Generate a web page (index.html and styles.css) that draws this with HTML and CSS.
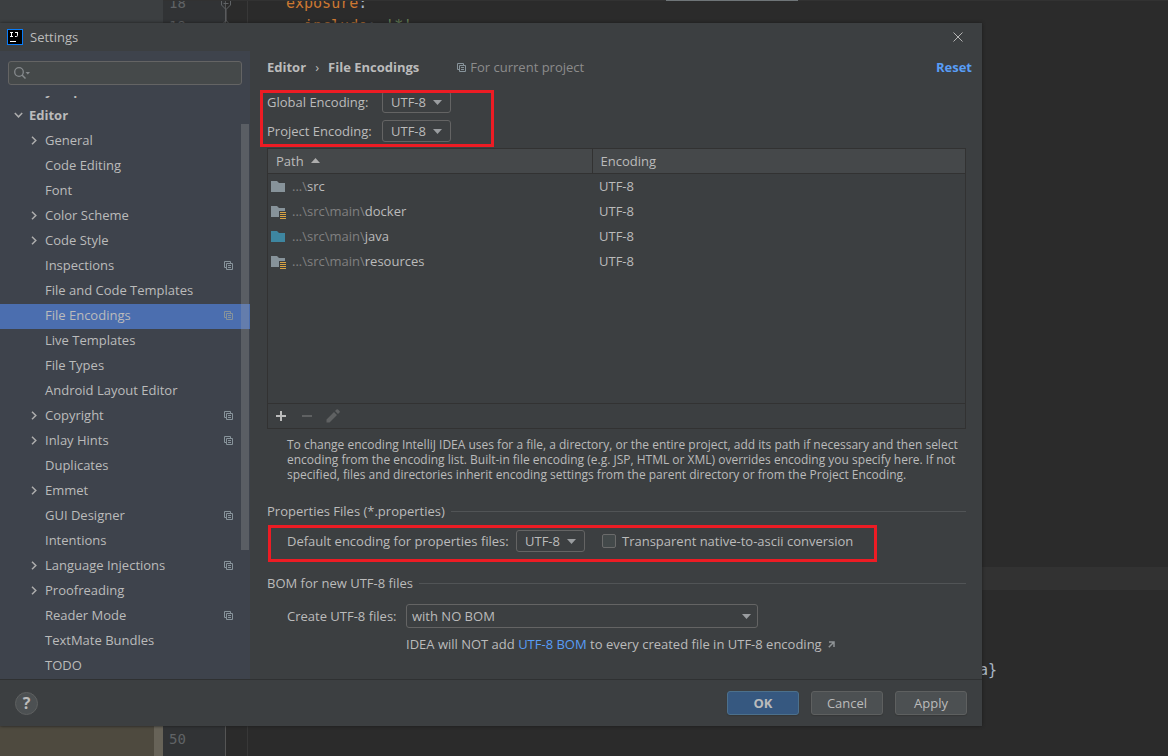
FILE: index.html
```html
<!DOCTYPE html>
<html lang="en">
<head>
<meta charset="utf-8">
<title>Settings</title>
<link rel="stylesheet" href="styles.css">
</head>
<body>
<svg class="defs" aria-hidden="true">
  <symbol id="copy" viewBox="0 0 9 9"><path d="M2 6.500H.5v-6h6V2M2.500 2.500h6v6h-6zM4 4.500h3M4 6.500h3" fill="none" stroke="currentColor"/></symbol>
  <symbol id="right" viewBox="0 0 7 9"><path d="M1 .8 4.800 4.500 1 8.200" fill="none" stroke="currentColor" stroke-width="1.500"/></symbol>
  <symbol id="down" viewBox="0 0 9 7"><path d="M.8 1 4.500 4.800 8.200 1" fill="none" stroke="currentColor" stroke-width="1.500"/></symbol>
  <symbol id="arrow" viewBox="0 0 9 5"><path d="M0 0h9L4.500 5z" fill="currentColor"/></symbol>
  <symbol id="folder" viewBox="0 0 16 14"><path d="M0 1h6l2 2h6v9H0z" fill="currentColor"/></symbol>
  <symbol id="resfolder" viewBox="0 0 16 14"><path d="M0 1h6l2 2h6v3H8v6H0z" fill="currentColor"/><path d="M9 7.500h6M9 9.500h6M9 11.500h6M9 13.500h6" stroke="#d9a343"/></symbol>
</svg>

<div class="ide">
  <div class="project"><div class="project-tail"></div></div>
  <div class="gutter">
    <div class="line">18</div><div class="line">19</div><div class="fill"></div><div class="line">50</div>
    <svg class="fold" viewBox="0 0 12 26"><path d="M1.500 0v5L6 9.500 10.500 5V0M3.500 3.500h5M6 9.500V21M1.500 26v-1L6 20.500l4.500 4.500v1" fill="none" stroke="#606366"/></svg>
  </div>
  <div class="code">
    <div class="line exposure"><span class="key">exposure</span>:</div>
    <div class="line include"><span class="key">include</span>: <span class="str">'*'</span></div>
    <div class="fill"></div>
    <div class="line current"></div>
    <div class="line"></div><div class="line"></div><div class="line"></div>
    <div class="line tail">a}</div>
    <div class="line"></div><div class="line"></div><div class="line"></div>
  </div>
  <div class="tabline"></div>
</div>

<main class="dialog">
  <header class="titlebar">
    <svg class="logo" viewBox="0 0 16 16"><path d="M0 0h16v16H0z" fill="#087cfa"/><path d="M1 1h14v14H1z" fill="#000"/><path d="M3 3.500h3M4.500 3v5M3 7.500h3M8 3.500h3M10.500 3v3.500q0 1-1 1H8M3 12.500h6" fill="none" stroke="#fff"/></svg>
    <span class="title">Settings</span>
    <button class="close" aria-label="Close"><svg viewBox="0 0 10 10"><path d="m.5.5 9 9m0-9-9 9" stroke="#b4b4b4"/></svg></button>
  </header>

  <div class="body">
    <aside class="sidebar">
      <label class="search">
        <svg viewBox="0 0 17 12"><circle cx="5" cy="5" r="4.300" fill="none" stroke="#85898c" stroke-width="1.300"/><path d="m8 8 3.500 3.500" stroke="#85898c" stroke-width="1.500"/><path d="M11.500 5H16l-2.200 2.500z" fill="#85898c"/></svg>
        <input type="text" aria-label="Search settings">
      </label>
      <div class="viewport">
        <ul class="tree">
          <li class="top">Keymap</li>
          <li class="top"><svg class="chev down"><use href="#down"/></svg>Editor</li>
          <li><svg class="chev"><use href="#right"/></svg>General</li>
          <li>Code Editing</li>
          <li>Font</li>
          <li><svg class="chev"><use href="#right"/></svg>Color Scheme</li>
          <li><svg class="chev"><use href="#right"/></svg>Code Style</li>
          <li>Inspections<svg class="copy"><use href="#copy"/></svg></li>
          <li>File and Code Templates</li>
          <li class="selected">File Encodings<svg class="copy"><use href="#copy"/></svg></li>
          <li>Live Templates</li>
          <li>File Types</li>
          <li>Android Layout Editor</li>
          <li><svg class="chev"><use href="#right"/></svg>Copyright<svg class="copy"><use href="#copy"/></svg></li>
          <li><svg class="chev"><use href="#right"/></svg>Inlay Hints<svg class="copy"><use href="#copy"/></svg></li>
          <li>Duplicates</li>
          <li><svg class="chev"><use href="#right"/></svg>Emmet</li>
          <li>GUI Designer<svg class="copy"><use href="#copy"/></svg></li>
          <li>Intentions</li>
          <li><svg class="chev"><use href="#right"/></svg>Language Injections<svg class="copy"><use href="#copy"/></svg></li>
          <li><svg class="chev"><use href="#right"/></svg>Proofreading</li>
          <li>Reader Mode<svg class="copy"><use href="#copy"/></svg></li>
          <li>TextMate Bundles</li>
          <li>TODO</li>
        </ul>
        <div class="thumb"></div>
      </div>
    </aside>

    <section class="content">
      <div class="crumbs">
        <b>Editor</b><span class="sep">›</span><b>File Encodings</b>
        <span class="scope"><svg class="copy"><use href="#copy"/></svg>For current project</span>
        <a class="reset" href="#">Reset</a>
      </div>

      <div class="encodings">
        <label for="global">Global Encoding:</label>
        <span class="combo"><select id="global"><option>UTF-8</option></select><svg><use href="#arrow"/></svg></span>
        <label for="project">Project Encoding:</label>
        <span class="combo"><select id="project"><option>UTF-8</option></select><svg><use href="#arrow"/></svg></span>
        <div class="mark mark-top"></div>
      </div>

      <div class="panel">
        <table>
          <thead><tr><th class="path">Path<svg class="sort" viewBox="0 0 9 5"><path d="M0 5h9L4.500 0z" fill="currentColor"/></svg></th><th>Encoding</th></tr></thead>
          <tbody>
            <tr><td><svg class="folder"><use href="#folder"/></svg><span class="dim">...\</span>src</td><td>UTF-8</td></tr>
            <tr><td><svg class="folder"><use href="#resfolder"/></svg><span class="dim">...\src\main\</span>docker</td><td>UTF-8</td></tr>
            <tr><td><svg class="folder source"><use href="#folder"/></svg><span class="dim">...\src\main\</span>java</td><td>UTF-8</td></tr>
            <tr><td><svg class="folder"><use href="#resfolder"/></svg><span class="dim">...\src\main\</span>resources</td><td>UTF-8</td></tr>
          </tbody>
        </table>
        <div class="tools">
          <button aria-label="Add"><svg viewBox="0 0 14 14"><path d="M2 7h10M7 2v10" stroke="#bbb" stroke-width="2"/></svg></button>
          <button aria-label="Remove" disabled><svg viewBox="0 0 14 14"><path d="M2 7h10" stroke="#5f6162" stroke-width="2"/></svg></button>
          <button aria-label="Edit" disabled><svg viewBox="0 0 14 14"><path d="M.5 13.500v-3L8 3l3 3-7.500 7.500zM9 2l1.500-1.500q.8-.7 1.500 0L13.500 2q.7.700 0 1.500L12 5z" fill="#5f6162"/></svg></button>
        </div>
      </div>

      <p class="help">To change encoding IntelliJ IDEA uses for a file, a directory, or the entire project, add its path if necessary and then select<br>encoding from the encoding list. Built-in file encoding (e.g. JSP, HTML or XML) overrides encoding you specify here. If not<br>specified, files and directories inherit encoding settings from the parent directory or from the Project Encoding.</p>

      <h2>Properties Files (*.properties)</h2>
      <div class="field props">
        <label class="name" for="props">Default encoding for properties files:</label>
        <span class="combo"><select id="props"><option>UTF-8</option></select><svg><use href="#arrow"/></svg></span>
        <label class="check"><input type="checkbox">Transparent native-to-ascii conversion</label>
        <div class="mark mark-props"></div>
      </div>

      <h2>BOM for new UTF-8 files</h2>
      <div class="bom">
        <label for="bom">Create UTF-8 files:</label>
        <span class="combo wide"><select id="bom"><option>with NO BOM</option></select><svg><use href="#arrow"/></svg></span>
        <p class="note">IDEA will NOT add <a href="#">UTF-8 BOM</a> to every created file in UTF-8 encoding<svg viewBox="0 0 7 7"><path d="M1 1h5v5M6 1 .8 6.200" fill="none" stroke="#8f9496" stroke-width="1.500"/></svg></p>
      </div>
    </section>
  </div>

  <footer class="footer">
    <button class="question" aria-label="Help">?</button>
    <button class="btn primary">OK</button>
    <button class="btn">Cancel</button>
    <button class="btn">Apply</button>
  </footer>
</main>
</body>
</html>
```

FILE: styles.css
```css
* { box-sizing: border-box; }
html, body { height: 100%; }
body {
  margin: 0;
  overflow: hidden;
  position: relative;
  background: #2b2b2b;
  color: #bbbbbb;
  font: 13px/18px "Open Sans", "Noto Sans", sans-serif;
}
button, input, select { font: inherit; color: inherit; }
button { padding: 0; border: 0; background: none; }
svg { display: block; flex: none; }
a { color: #589df6; text-decoration: none; }
.defs { position: absolute; width: 0; height: 0; }

/* editor behind the dialog */
.ide {
  display: grid;
  grid-template: 100% / 163px 85px 1fr;
  height: 100%;
  overflow: hidden;
  font: 15px/23px "DejaVu Sans Mono", monospace;
}
.project { display: flex; align-items: flex-end; background: #3c3f41; }
.project-tail { width: 100%; height: 30px; background: #4e4a3f; border-right: 9px solid #676358; }
.gutter, .code { display: flex; flex-direction: column; margin-top: -8px; padding-bottom: 5px; }
.line { height: 23px; flex: none; }
.fill { flex: 1; }
.gutter {
  position: relative;
  padding-left: 6px;
  font-size: 14px;
  color: #606366;
  background: linear-gradient(90deg, #313335 62px, #555555 62px 63px, #2b2b2b 63px 84px, #383838 84px);
}
.fold { position: absolute; left: 57px; top: 8px; width: 12px; height: 26px; }
.code { color: #a9b7c6; }
.exposure { padding-left: 38px; }
.include { padding-left: 56px; }
.key { color: #cc7832; }
.str { color: #6a8759; }
.current { background: #323232; }
.tail { padding-left: 731px; }
.tabline { position: absolute; top: 0; left: 163px; right: 0; height: 1px; background: linear-gradient(90deg, #323232 503px, #6f7578 503px 635px, #323232 635px); }

/* dialog window */
.dialog {
  position: absolute;
  inset: 23px 186px 30px 0;
  display: flex;
  flex-direction: column;
  background: #3c3f41;
  box-shadow: 0 0 3px #1c1c1c;
}
.titlebar { display: flex; align-items: center; height: 28px; padding: 0 19px 0 7px; }
.logo { width: 16px; height: 16px; }
.title { flex: 1; padding-left: 7px; }
.close svg { width: 10px; height: 10px; }
.body { flex: 1; min-height: 0; display: grid; grid-template-columns: 250px 1fr; }

.sidebar { display: flex; flex-direction: column; min-height: 0; padding-top: 10px; background: #3e434c; }
.search {
  display: flex;
  align-items: center;
  height: 24px;
  margin: 0 8px 11px;
  padding-left: 5px;
  border: 1px solid #646464;
  border-radius: 3px;
  background: #45494a;
}
.search svg { width: 17px; height: 12px; }
.search input { flex: 1; min-width: 0; border: 0; outline: 0; background: none; }
.viewport { position: relative; flex: 1; min-height: 0; overflow: hidden; }
.tree { list-style: none; margin: -17px 0 0; padding: 0; }
.tree li { display: flex; align-items: center; height: 25px; padding: 0 17px 4px 45px; }
.tree .top { padding-left: 29px; font-weight: bold; }
.tree .selected { background: #4b6eaf; }
.tree svg { margin-top: 2px; }
.tree .chev { width: 7px; height: 9px; margin-right: 7px; margin-left: -14px; color: #adadad; }
.tree .chev.down { width: 9px; height: 7px; margin-right: 6px; margin-left: -15px; }
.copy { width: 9px; height: 9px; color: #87939a; }
.tree .copy { margin-left: auto; }
.thumb { position: absolute; top: 28px; right: 1px; width: 8px; height: 426px; background: rgba(166, 166, 166, .28); }

.content { min-width: 0; padding: 6px 16px 0 17px; }
.crumbs { display: flex; align-items: center; height: 20px; margin-right: -6px; }
.sep { width: 22px; text-align: center; }
.scope { display: flex; align-items: center; gap: 4px; margin-left: 38px; color: #8c8c8c; }
.reset { margin-left: auto; font-weight: bold; }

.encodings {
  position: relative;
  display: grid;
  grid-template-columns: 115px 69px;
  grid-auto-rows: 22px;
  row-gap: 7px;
  align-items: center;
  margin-top: 14px;
}
.combo { display: grid; grid-template-columns: 1fr; align-items: center; width: 69px; height: 22px; }
.combo select {
  grid-area: 1 / 1;
  width: 100%;
  height: 100%;
  padding: 0 0 0 8px;
  appearance: none;
  border: 1px solid #646464;
  border-radius: 3px;
  background: #3c3f41;
}
.combo svg { grid-area: 1 / 1; justify-self: end; width: 9px; height: 5px; margin-right: 9px; color: #9a9da0; pointer-events: none; }
.mark { position: absolute; border: 3px solid #ed1c24; pointer-events: none; }
.mark-top { inset: -1px auto -5px -7px; width: 234px; }

.panel { margin-top: 6px; border: 1px solid #323232; }
table { width: 100%; border-collapse: collapse; table-layout: fixed; }
thead { background: #45484a; }
th { height: 24px; padding: 0 8px; text-align: left; font-weight: normal; border-bottom: 1px solid #323232; }
.path { width: 324px; border-right: 1px solid #323232; }
.sort { display: inline-block; width: 9px; height: 5px; margin: 0 0 3px 7px; color: #adadad; }
td { height: 25px; padding: 0 6px 0 3px; }
td + td { padding-left: 7px; }
.folder { display: inline-block; width: 16px; height: 14px; margin-right: 5px; vertical-align: -3px; color: #87939a; }
.source { color: #3e86a0; }
.dim { color: #808080; }
.tools { display: flex; align-items: center; gap: 12px; height: 25px; margin-top: 130px; padding-left: 6px; border-top: 1px solid #323232; }
.tools svg { width: 14px; height: 14px; }

.help { margin: 8px 0 0 20px; font-size: 12px; line-height: 15px; white-space: nowrap; }
h2 { display: flex; align-items: center; gap: 6px; margin: 20px 0 0; font-size: 13px; line-height: 18px; font-weight: normal; }
h2::after { content: ""; flex: 1; height: 1px; background: #515456; }
.field { position: relative; display: flex; align-items: center; height: 22px; margin: 10px 0 0; padding-left: 20px; }
.name { width: 229px; }
.field .combo { margin-right: 17px; }
.check { display: flex; align-items: center; gap: 6px; }
.check input { width: 14px; height: 14px; margin: 0; appearance: none; border: 1px solid #6b6b6b; border-radius: 2px; background: #43494a; }
.mark-props { inset: -5px auto -10px 1px; width: 609px; }
.props + h2 { margin-top: 22px; }
.bom { display: grid; grid-template-columns: 119px 352px; align-items: center; row-gap: 7px; margin: 12px 0 0 20px; }
.wide { width: 100%; height: 24px; }
.wide select { padding-left: 5px; }
.wide svg { margin-right: 7px; }
.note { grid-column: 2; display: flex; align-items: center; margin: 0; white-space: pre; }
.note svg { width: 7px; height: 7px; margin-left: 6px; }

.footer { display: flex; align-items: center; gap: 12px; height: 47px; padding: 0 15px; border-top: 1px solid #2f3132; }
.question { width: 23px; height: 23px; margin-right: auto; border: 1px solid #5e6060; border-radius: 50%; background: #4c5052; font-size: 16px; font-weight: bold; line-height: 20px; }
.btn { width: 72px; height: 24px; border: 1px solid #5e6060; border-radius: 3px; background: #4c5052; box-shadow: 0 1px 1px #353738; }
.primary { border-color: #4c708c; background: #365880; font-weight: bold; }
```
